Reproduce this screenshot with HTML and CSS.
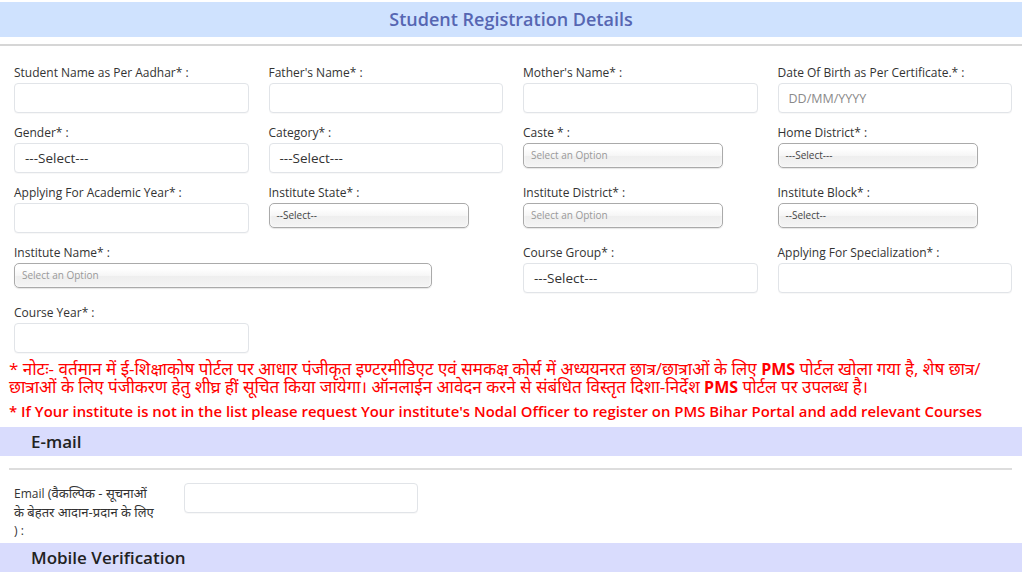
FILE: index.html
```html
<!DOCTYPE html>
<html lang="en">
<head>
<meta charset="utf-8">
<title>Student Registration Details</title>
<link rel="stylesheet" href="styles.css">
</head>
<body>
<div class="page">
  <div class="title-band">Student Registration Details</div>
  <div class="rule"></div>

  <div class="form-grid">
    <div class="field">
      <label>Student Name as Per Aadhar* :</label>
      <div class="input"></div>
    </div>
    <div class="field">
      <label>Father's Name* :</label>
      <div class="input"></div>
    </div>
    <div class="field">
      <label>Mother's Name* :</label>
      <div class="input"></div>
    </div>
    <div class="field">
      <label>Date Of Birth as Per Certificate.* :</label>
      <div class="input"><span class="placeholder">DD/MM/YYYY</span></div>
    </div>

    <div class="field">
      <label>Gender* :</label>
      <div class="input select-text">---Select---</div>
    </div>
    <div class="field">
      <label>Category* :</label>
      <div class="input select-text">---Select---</div>
    </div>
    <div class="field">
      <label>Caste * :</label>
      <div class="chosen chosen-w200 muted">Select an Option</div>
    </div>
    <div class="field">
      <label>Home District* :</label>
      <div class="chosen chosen-w200">---Select---</div>
    </div>

    <div class="field">
      <label>Applying For Academic Year* :</label>
      <div class="input"></div>
    </div>
    <div class="field">
      <label>Institute State* :</label>
      <div class="chosen chosen-w200">--Select--</div>
    </div>
    <div class="field">
      <label>Institute District* :</label>
      <div class="chosen chosen-w200 muted">Select an Option</div>
    </div>
    <div class="field">
      <label>Institute Block* :</label>
      <div class="chosen chosen-w200">--Select--</div>
    </div>

    <div class="field span2">
      <label>Institute Name* :</label>
      <div class="chosen chosen-w418 muted">Select an Option</div>
    </div>
    <div class="field">
      <label>Course Group* :</label>
      <div class="input select-text">---Select---</div>
    </div>
    <div class="field">
      <label>Applying For Specialization* :</label>
      <div class="input"></div>
    </div>

    <div class="field">
      <label>Course Year* :</label>
      <div class="input"></div>
    </div>
  </div>

  <p class="note-hi">* नोटः- वर्तमान में ई-शिक्षाकोष पोर्टल पर आधार पंजीकृत इण्टरमीडिएट एवं समकक्ष कोर्स में अध्ययनरत छात्र/छात्राओं के लिए <b>PMS</b> पोर्टल खोला गया है, शेष छात्र/<br>छात्राओं के लिए पंजीकरण हेतु शीघ्र हीं सूचित किया जायेगा। ऑनलाईन आवेदन करने से संबंधित विस्तृत दिशा-निर्देश <b>PMS</b> पोर्टल पर उपलब्ध है।</p>
  <p class="note-en">* If Your institute is not in the list please request Your institute's Nodal Officer to register on PMS Bihar Portal and add relevant Courses</p>

  <div class="section-band">E-mail</div>
  <div class="rule-inset"></div>
  <div class="email-row">
    <div class="email-label">Email <span class="hi">(वैकल्पिक - सूचनाओं</span><br><span class="hi">के बेहतर आदान-प्रदान के लिए</span><br>) :</div>
    <div class="email-input-col"><div class="input"></div></div>
  </div>
  <div class="section-band">Mobile Verification</div>
</div>
</body>
</html>
```

FILE: styles.css
```css
* { box-sizing: border-box; }

html, body {
  margin: 0;
  padding: 0;
  background: #ffffff;
}

body {
  font-family: "Open Sans", "Noto Sans", "DejaVu Sans", sans-serif;
  color: #333333;
}

.page {
  width: 1022px;
  padding-top: 2px;
}

.title-band {
  height: 35px;
  background: #cfe2fe;
  color: #5666b2;
  font-size: 18px;
  font-weight: 600;
  line-height: 35px;
  text-align: center;
}

.rule {
  height: 2px;
  background: #d6d6d6;
  margin-top: 7px;
}

.form-grid {
  display: grid;
  grid-template-columns: repeat(4, 1fr);
  row-gap: 12px;
  padding: 19px 0 0 4px;
}

.field {
  padding: 0 10px;
}

.span2 { grid-column: span 2; }

.field label {
  display: block;
  font-size: 12px;
  line-height: 16px;
  margin-bottom: 2px;
  color: #333333;
  white-space: nowrap;
}

.input {
  height: 30px;
  border: 1px solid #e1e4e8;
  border-radius: 4px;
  background: #ffffff;
  box-shadow: 0 1px 1px rgba(0, 0, 0, 0.03);
  padding: 0 10px;
  display: flex;
  align-items: center;
}

.placeholder {
  font-size: 12.5px;
  color: #8a8a8a;
}

.select-text {
  font-size: 13.5px;
  color: #333333;
}

.chosen {
  height: 25px;
  margin-top: 1px;
  border: 1px solid #aaaaaa;
  border-radius: 5px;
  background: linear-gradient(#ffffff 20%, #f6f6f6 50%, #eeeeee 52%, #f4f4f4 100%);
  box-shadow: 0 0 3px #ffffff inset, 0 1px 1px rgba(0, 0, 0, 0.1);
  font-size: 10px;
  line-height: 23px;
  padding-left: 7px;
  color: #444444;
}

.chosen.muted { color: #999999; }
.chosen-w200 { width: 200px; }
.chosen-w418 { width: 418px; }

.note-hi {
  margin: 7px 0 0 0;
  padding-left: 9px;
  color: #ff0000;
  font-size: 17px;
  line-height: 18px;
  white-space: nowrap;
}

.note-hi b {
  font-weight: 700;
  font-size: 16px;
}

.note-en {
  margin: 5px 0 0 0;
  padding-left: 9px;
  color: #ff0000;
  font-size: 14.9px;
  font-weight: 600;
  line-height: 20px;
  white-space: nowrap;
}

.section-band {
  height: 29px;
  background: #d9dcfd;
  color: #222222;
  font-size: 17px;
  font-weight: 600;
  line-height: 29px;
  padding-left: 31px;
}

.note-en + .section-band { margin-top: 6px; }

.rule-inset {
  height: 2px;
  background: #dddddd;
  margin: 12px 10px 0 9px;
}

.email-row {
  display: grid;
  grid-template-columns: 169.7px 254.5px;
  padding: 13px 0 3px 4px;
}

.email-label {
  padding: 1px 10px 0 10px;
  font-size: 12px;
  line-height: 18px;
  color: #333333;
  white-space: nowrap;
}

.email-label .hi { font-size: 13px; }

.email-input-col {
  padding: 0 10px;
}
```
